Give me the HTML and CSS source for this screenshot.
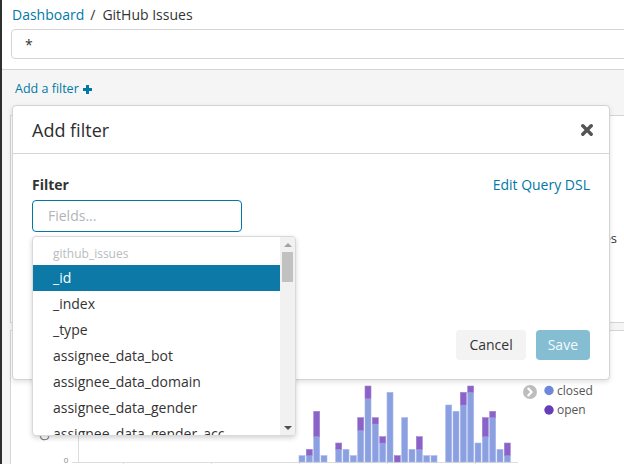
FILE: index.html
```html
<!DOCTYPE html>
<html>
<head>
<meta charset="utf-8">
<link rel="stylesheet" href="styles.css">
</head>
<body>
<div class="app">
  <div class="sidebar"></div>
  <div class="main">
    <div class="top">
      <div class="crumbs"><span class="crumb-link">Dashboard</span><span class="sep">/</span><span class="crumb-current">GitHub Issues</span></div>
      <div class="query">*</div>
    </div>
    <div class="filterbar">
      <span class="add-filter">Add a filter
        <svg class="plus" width="9" height="9" viewBox="0 0 9 9"><rect x="3" y="0" width="3" height="9" fill="#0079a5"/><rect x="0" y="3" width="9" height="3" fill="#0079a5"/></svg>
      </span>
    </div>
    <div class="grid">
      <div class="panel panel-a"><div class="metric-label">Issues</div></div>
      <div class="panel panel-b">
        <svg class="chart" width="613" height="133" viewBox="0 0 613 133">
          <text x="38" y="110" transform="rotate(-90 38 110)" font-size="12" fill="#777" font-family="Open Sans">Count</text>
          <rect x="67" y="0" width="1" height="131" fill="#ddd"/>
          <rect x="61" y="131" width="446" height="1" fill="#ddd"/>
          <rect x="112" y="131" width="1" height="3" fill="#ddd"/>
          <rect x="200" y="131" width="1" height="3" fill="#ddd"/>
          <rect x="288" y="131" width="1" height="3" fill="#ddd"/>
          <rect x="376" y="131" width="1" height="3" fill="#ddd"/>
          <rect x="464" y="131" width="1" height="3" fill="#ddd"/>
          <text x="55" y="132" font-size="8" fill="#888" text-anchor="middle" font-family="Open Sans">0</text>
          <g class="closed">
            <rect x="288" y="124.67" width="6" height="6.33"/>
            <rect x="295.3" y="124.67" width="6" height="6.33"/>
            <rect x="302.7" y="105.67" width="6" height="25.33"/>
            <rect x="310" y="124.67" width="6" height="6.33"/>
            <rect x="324.7" y="118.33" width="6" height="12.67"/>
            <rect x="332" y="118.33" width="6" height="12.67"/>
            <rect x="339.3" y="124.67" width="6" height="6.33"/>
            <rect x="346.7" y="99.33" width="6" height="31.67"/>
            <rect x="354" y="67.67" width="6" height="63.33"/>
            <rect x="361.3" y="93" width="6" height="38"/>
            <rect x="368.7" y="112" width="6" height="19"/>
            <rect x="376" y="61.33" width="6" height="69.67"/>
            <rect x="390.7" y="86.67" width="6" height="44.33"/>
            <rect x="398" y="118.33" width="6" height="12.67"/>
            <rect x="405.3" y="118.33" width="6" height="12.67"/>
            <rect x="412.7" y="124.67" width="6" height="6.33"/>
            <rect x="420" y="124.67" width="6" height="6.33"/>
            <rect x="434.7" y="74" width="6" height="57"/>
            <rect x="442" y="80.33" width="6" height="50.67"/>
            <rect x="449.3" y="74" width="6" height="57"/>
            <rect x="456.7" y="61.33" width="6" height="69.67"/>
            <rect x="464" y="112" width="6" height="19"/>
            <rect x="471.3" y="105.67" width="6" height="25.33"/>
            <rect x="478.7" y="86.67" width="6" height="44.33"/>
            <rect x="486" y="118.33" width="6" height="12.67"/>
            <rect x="493.3" y="124.67" width="6" height="6.33"/>
          </g>
          <g class="open">
            <rect x="295.3" y="118.33" width="6" height="6.33"/>
            <rect x="302.7" y="80.33" width="6" height="25.33"/>
            <rect x="324.7" y="112" width="6" height="6.33"/>
            <rect x="346.7" y="86.67" width="6" height="12.67"/>
            <rect x="354" y="55" width="6" height="12.67"/>
            <rect x="361.3" y="86.67" width="6" height="6.33"/>
            <rect x="368.7" y="105.67" width="6" height="6.33"/>
            <rect x="383.3" y="124.67" width="6" height="6.33"/>
            <rect x="405.3" y="105.67" width="6" height="12.67"/>
            <rect x="449.3" y="61.33" width="6" height="12.67"/>
            <rect x="456.7" y="55" width="6" height="6.33"/>
            <rect x="471.3" y="86.67" width="6" height="19"/>
            <rect x="478.7" y="80.33" width="6" height="6.33"/>
            <rect x="493.3" y="112" width="6" height="12.67"/>
          </g>
          <circle cx="519" cy="61" r="7" fill="#bdbdbd"/>
          <path d="M517.3 57.6 L520.6 61 L517.3 64.4" fill="none" stroke="#fff" stroke-width="2.2" stroke-linecap="round" stroke-linejoin="round"/>
          <circle cx="538" cy="59.5" r="4.7" fill="#6f87d8"/>
          <text x="546" y="63.8" font-size="12" fill="#555" font-family="Open Sans">closed</text>
          <circle cx="538" cy="79" r="4.7" fill="#663db8"/>
          <text x="546" y="83.3" font-size="12" fill="#555" font-family="Open Sans">open</text>
        </svg>
      </div>
    </div>
  </div>
</div>

<div class="modal">
  <div class="modal-header">
    <span class="modal-title">Add filter</span>
    <svg class="close" width="12" height="12" viewBox="0 0 12 12"><path d="M1.8 1.8 L10.2 10.2 M10.2 1.8 L1.8 10.2" stroke="#545454" stroke-width="3.4" stroke-linecap="round"/></svg>
  </div>
  <div class="modal-body">
    <div class="label-row">
      <span class="label">Filter</span>
      <span class="dsl-link">Edit Query DSL</span>
    </div>
    <div class="fields-input">Fields...</div>
  </div>
  <div class="modal-footer">
    <span class="btn btn-cancel">Cancel</span>
    <span class="btn btn-save">Save</span>
  </div>
  <div class="dropdown">
    <div class="options">
      <div class="group-label">github_issues</div>
      <div class="option is-active">_id</div>
      <div class="option">_index</div>
      <div class="option">_type</div>
      <div class="option">assignee_data_bot</div>
      <div class="option">assignee_data_domain</div>
      <div class="option">assignee_data_gender</div>
      <div class="option">assignee_data_gender_acc</div>
    </div>
    <div class="scrollbar">
      <div class="arrow-box"><span class="arrow-up"></span></div>
      <div class="thumb"></div>
      <div class="track"></div>
      <div class="arrow-box"><span class="arrow-down"></span></div>
    </div>
  </div>
</div>
</body>
</html>
```

FILE: styles.css
```css
* { box-sizing: border-box; }

body {
  margin: 0;
  width: 624px;
  height: 464px;
  overflow: hidden;
  position: relative;
  font-family: "Open Sans", sans-serif;
  color: #2d2d2d;
  background: #f5f5f5;
}

.app {
  display: flex;
  height: 464px;
}

.sidebar {
  width: 2px;
  flex: none;
  background: #2f2f2f;
}

.main {
  flex: 1;
  min-width: 0;
  overflow: hidden;
}

.top {
  background: #fff;
  padding: 5px 0 10px 0;
}

.crumbs {
  height: 20px;
  line-height: 20px;
  font-size: 14px;
  padding-left: 10px;
  white-space: nowrap;
}

.crumb-link { color: #0079a5; }
.sep { margin: 0 7px 0 6px; color: #333; }
.crumb-current { color: #333; }

.query {
  margin: 4px 0 0 9px;
  width: 700px;
  height: 30px;
  border: 1px solid #d4d4d4;
  border-radius: 4px 0 0 4px;
  padding-left: 13px;
  font-size: 14px;
  line-height: 30px;
  color: #333;
}

.filterbar {
  border-top: 1px solid #d4d4d4;
  height: 38px;
  padding: 6px 0 0 13px;
}

.add-filter {
  display: inline-flex;
  align-items: center;
  gap: 4px;
  font-size: 12.5px;
  line-height: 20px;
  color: #0079a5;
  white-space: nowrap;
}

.grid {
  padding: 8px 0 0 8px;
  display: flex;
  flex-direction: column;
  gap: 7px;
}

.panel {
  background: #fff;
  border: 1px solid #d4d4d4;
  width: 660px;
}

.panel-a {
  height: 208px;
  padding-top: 112px;
}

.metric-label {
  text-align: right;
  padding-right: 52px;
  font-size: 13px;
  line-height: 20px;
  color: #333;
}

.panel-b {
  height: 200px;
}

.chart { display: block; }
.chart .closed rect { fill: #8ba0e0; stroke: #a8b7ea; stroke-width: 0.6; }
.chart .open rect { fill: #8a62c8; stroke: #a184d4; stroke-width: 0.6; }

/* Modal popover */
.modal {
  position: absolute;
  left: 12px;
  top: 105px;
  width: 598px;
  height: 275px;
  background: #fff;
  border: 1px solid #d4d4d4;
  border-radius: 4px;
  box-shadow: 0 2px 5px rgba(0, 0, 0, 0.12);
  display: flex;
  flex-direction: column;
}

.modal-header {
  height: 48px;
  border-bottom: 1px solid #d4d4d4;
  display: flex;
  align-items: center;
  justify-content: space-between;
  padding: 0 16px 0 19px;
  flex: none;
}

.modal-title {
  font-size: 18px;
  color: #2d2d2d;
}

.close { display: block; }

.modal-body {
  padding: 21px 19px 0 19px;
}

.label-row {
  display: flex;
  justify-content: space-between;
  line-height: 20px;
  font-size: 14px;
}

.label {
  font-weight: 700;
  color: #333;
}

.dsl-link { color: #0079a5; }

.fields-input {
  margin-top: 5px;
  width: 210px;
  height: 32px;
  border: 1px solid #0079a5;
  border-radius: 4px;
  padding-left: 15px;
  font-size: 14px;
  line-height: 30px;
  color: #b0b4ba;
}

.modal-footer {
  margin-top: auto;
  display: flex;
  justify-content: flex-end;
  gap: 10px;
  padding: 0 19px 19px 0;
}

.btn {
  height: 30px;
  line-height: 30px;
  padding: 0 13px;
  border-radius: 4px;
  font-size: 14px;
}

.btn-cancel {
  background: #f3f3f3;
  color: #333;
}

.btn-save {
  background: #85bed3;
  color: #f4fafc;
  padding: 0 12px;
}

/* Dropdown list */
.dropdown {
  position: absolute;
  left: 19px;
  top: 130px;
  width: 264px;
  height: 200px;
  background: #fff;
  border: 1px solid #d9d9d9;
  border-radius: 4px;
  box-shadow: 0 2px 5px rgba(0, 0, 0, 0.18);
  display: flex;
  overflow: hidden;
}

.options {
  width: 247px;
  flex: none;
  overflow: hidden;
}

.group-label {
  padding: 7px 0 1px 20px;
  line-height: 20px;
  font-size: 12px;
  color: #b9bcc0;
}

.option {
  height: 26px;
  line-height: 26px;
  padding-left: 20px;
  font-size: 14px;
  color: #333;
  white-space: nowrap;
}

.option.is-active {
  background: #0c79a6;
  color: #fff;
}

.scrollbar {
  width: 15px;
  flex: none;
  background: #f1f1f1;
  display: flex;
  flex-direction: column;
}

.arrow-box {
  height: 15px;
  display: flex;
  align-items: center;
  justify-content: center;
  flex: none;
}

.arrow-up {
  width: 0;
  height: 0;
  border-left: 4px solid transparent;
  border-right: 4px solid transparent;
  border-bottom: 4px solid #a3a3a3;
}

.arrow-down {
  width: 0;
  height: 0;
  border-left: 4px solid transparent;
  border-right: 4px solid transparent;
  border-top: 4px solid #505050;
}

.thumb {
  height: 30px;
  margin: 0 2px;
  background: #c1c1c1;
  flex: none;
}

.track { flex: 1; }
```
